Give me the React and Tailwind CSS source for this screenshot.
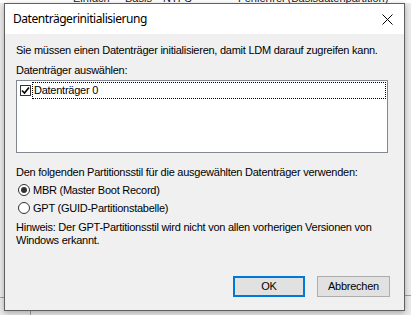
export default function App() {
  const sans = { fontFamily: '"Liberation Sans", Arial, sans-serif' };
  return (
    <div className="relative w-[411px] h-[315px] overflow-hidden bg-[#f3f3f3]" style={sans}>
      {/* background window behind the dialog */}
      <div className="absolute inset-0 bg-white">
        <div className="absolute left-0 top-[-8px] w-full h-[12px] text-[11px] text-[#1a1a1a] leading-[12px] whitespace-nowrap">
          <span className="absolute left-[73px]">Einfach</span>
          <span className="absolute left-[125px]">Basis</span>
          <span className="absolute left-[163px]">NTFS</span>
          <span className="absolute left-[238px]">Fehlerfrei (Basisdatenpartition)</span>
        </div>
        <div className="absolute left-0 top-[3px] w-full h-[312px] bg-[#ececec]" />
        <div className="absolute left-0 top-[297px] w-[6px] h-px bg-[#a0a0a0]" />
        <div className="absolute right-0 top-[295px] w-[8px] h-px bg-[#a0a0a0]" />
        <div className="absolute left-[30px] top-[311px] w-px h-[4px] bg-[#a0a0a0]" />
      </div>

      {/* dialog window */}
      <div className="absolute left-[4px] top-[3px] w-[401px] h-[308px] border border-[#5f5f5f] bg-[#f0f0f0] shadow-[0_2px_6px_rgba(0,0,0,0.3)] flex flex-col">
        {/* title bar */}
        <div className="h-[30px] bg-white flex items-center justify-between pl-[8px] pr-[10px] shrink-0">
          <span className="text-[12px] tracking-[-0.45px] text-black" style={{ fontFamily: '"Noto Sans", "Open Sans", sans-serif' }}>
            Datenträgerinitialisierung
          </span>
          <svg width="11" height="11" viewBox="0 0 11 11" className="mr-[1px]">
            <path d="M0.5 0.5 L10.5 10.5 M10.5 0.5 L0.5 10.5" stroke="#000" strokeWidth="1" fill="none" />
          </svg>
        </div>

        {/* content */}
        <div className="flex flex-col flex-1 pl-[11px] pr-[16px] text-[11px] leading-[13px] tracking-[-0.25px] text-black whitespace-nowrap">
          <div className="mt-[10px]">Sie müssen einen Datenträger initialisieren, damit LDM darauf zugreifen kann.</div>
          <div className="mt-[7px]">Datenträger auswählen:</div>
          <div className="mt-[3px] h-[73px] border border-[#828790] bg-white p-[1px]">
            <div className="flex items-center h-[17px] pl-[2px]">
              <div className="w-[11px] h-[11px] border border-[#333] bg-white flex items-center justify-center shrink-0">
                <svg width="9" height="9" viewBox="0 0 9 9">
                  <path d="M1 4.5 L3.5 7 L8 1.5" stroke="#000" strokeWidth="1.6" fill="none" />
                </svg>
              </div>
              <div className="ml-[1px] flex-1 h-[17px] border border-dotted border-[#000] flex items-center pl-[1px]">
                Datenträger 0
              </div>
            </div>
          </div>
          <div className="mt-[13px]">Den folgenden Partitionsstil für die ausgewählten Datenträger verwenden:</div>
          <div className="mt-[2px] flex items-center h-[18px]">
            <div className="ml-[2px] w-[12px] h-[12px] rounded-full border border-[#333] bg-white flex items-center justify-center">
              <div className="w-[6px] h-[6px] rounded-full bg-[#333]" />
            </div>
            <span className="ml-[3px]">MBR (Master Boot Record)</span>
          </div>
          <div className="flex items-center h-[18px]">
            <div className="ml-[2px] w-[12px] h-[12px] rounded-full border border-[#333] bg-white" />
            <span className="ml-[3px]">GPT (GUID-Partitionstabelle)</span>
          </div>
          <div className="mt-[4px]">
            Hinweis: Der GPT-Partitionsstil wird nicht von allen vorherigen Versionen von
            <br />
            Windows erkannt.
          </div>

          <div className="mt-auto mb-[13px] flex justify-end gap-[12px]">
            <button className="w-[72px] h-[21px] border-2 border-[#0078d7] bg-[#e1e1e1] text-[11px] text-black flex items-center justify-center">
              OK
            </button>
            <button className="w-[73px] h-[21px] border border-[#adadad] bg-[#e1e1e1] text-[11px] text-black flex items-center justify-center mr-[-2px]">
              Abbrechen
            </button>
          </div>
        </div>
      </div>
    </div>
  );
}
